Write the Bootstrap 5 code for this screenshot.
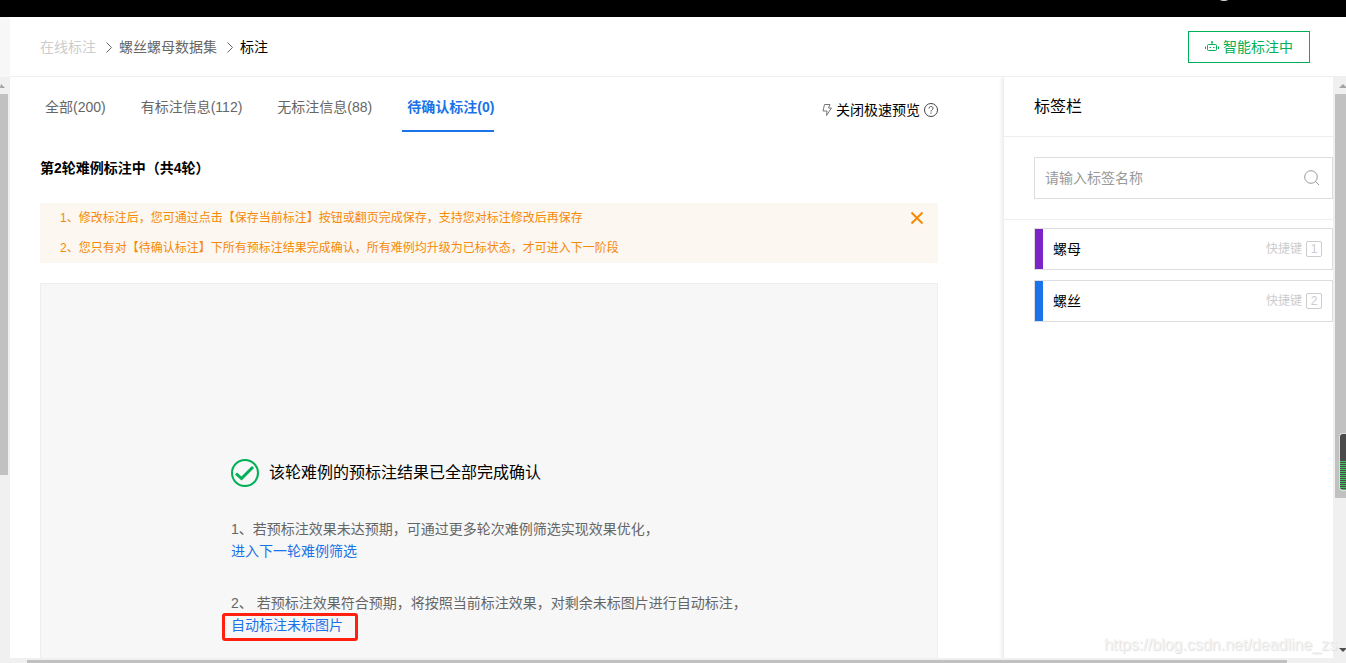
<!DOCTYPE html>
<html lang="zh-CN">
<head>
<meta charset="utf-8">
<meta name="viewport" content="width=device-width, initial-scale=1">
<title>标注</title>
<link href="https://cdn.jsdelivr.net/npm/bootstrap@5.3.0/dist/css/bootstrap.min.css" rel="stylesheet">
<style>
body { font: 14px/22px "Liberation Sans", "Noto Sans CJK SC", sans-serif; color: #000; background: #fff; }
a { color: #1a73e8; text-decoration: none; }
svg { display: block; flex: none; }
.top-strip { height: 17px; background: #000; overflow: hidden; }
.top-dot { right: 116px; top: -6px; width: 12px; height: 7px; border-radius: 50%; background: #ddd; }
.gutter { width: 10px; background: #f7f7f7; }
.page-head { height: 60px; }
.head-main { border-bottom: 1px solid #eee; padding: 0 36px 0 30px; }
.crumbs .breadcrumb-item + .breadcrumb-item { padding-left: 9px; }
.crumbs .breadcrumb-item + .breadcrumb-item::before { content: none; }
.crumbs svg { margin-right: 5px; }
.c-mute { color: #ccc; }
.c-gray { color: #666; }
.btn-smart { --bs-btn-color: #00b057; --bs-btn-border-color: #00b057; --bs-btn-hover-bg: #eefaf3; --bs-btn-hover-color: #00b057; --bs-btn-hover-border-color: #00b057; border-radius: 0; height: 32px; padding: 0 16px; font-size: 14px; line-height: 22px; }
.vbar { background: #f0f0f0; }
.vbar-left { width: 10px; padding-right: 2px; }
.vbar-right { width: 13px; padding-left: 2px; }
.vbar .arrow-box { height: 17px; flex: none; }
.thumb { background: #c1c1c1; }
.thumb-left { height: 381px; height: 65.6%; flex: none; }
.thumb-right { height: 69.5%; flex: none; }
.arrow { width: 0; height: 0; margin-top: 1px; border: 4px solid transparent; border-top: 0; border-bottom-color: #a3a3a3; }
.vbar-left .arrow { border-left-width: 1px; }
.arrow.down { border-top: 4px solid #505050; border-bottom: 0; }
.hbar { height: 5px; background: #f0f0f0; padding: 2px 59px 0 27px; }
.main-pane { padding: 0 65px 0 30px; min-width: 0; }
.tabs { gap: 30px; }
.tabs .nav-link { color: #666; padding: 19px 0 12px 5px; border-bottom: 2px solid transparent; }
.tabs .nav-link.active { color: #1a73e8; font-weight: 700; border-color: #1a73e8; }
.quick { padding: 22px 0 0; line-height: 22px; }
.round-title { font-size: 14px; line-height: 22px; font-weight: 700; margin: 25px 0 24px; }
.notice { background: #fcf7f1; color: #f58a07; font-size: 12px; line-height: 30px; padding: 0 14px 0 20px; margin-bottom: 20px; }
.canvas-area { background: #f7f7f7; border: 1px solid #eee; border-bottom: 0; padding: 175px 0 0 190px; overflow: hidden; }
.done-title { font-size: 16px; line-height: 28px; font-weight: 400; margin-bottom: 31px; }
.option-two { margin-top: 30px; }
.hl { left: -9px; top: -1px; width: 136px; height: 28px; border: 3px solid #ff2010; border-radius: 3px; pointer-events: none; }
.side { width: 330px; border-left: 1px solid #eee; box-shadow: -2px 0 3px #f0f0f0; }
.side-title { font-size: 16px; line-height: 59px; font-weight: 400; padding-left: 30px; border-bottom: 1px solid #eee; }
.search-wrap { padding: 20px 0 20px 30px; border-bottom: 1px solid #eee; }
.boxed { height: 42px; border: 1px solid #ddd; }
.boxed input { padding: 0 10px; font-size: 14px; line-height: 22px; }
.boxed input::placeholder { color: #999; }
.labels { padding: 8px 0 0 30px; gap: 10px; }
.swatch { width: 8px; }
.label-name { padding-left: 10px; }
.c-1 { background: #7b25c8; }
.c-2 { background: #1a73e8; }
.hotkey { font-size: 12px; color: #ccc; margin-right: 10px; }
.keycap { width: 16px; height: 16px; border: 1px solid #ccc; border-radius: 2px; line-height: 14px; text-align: center; }
.meter { right: 0; top: 433px; width: 7px; height: 58px; border: 1px solid #ddd; border-right: 0; border-radius: 4px 0 0 4px; background: linear-gradient(#4a4a4a 26px, transparent 26px), repeating-linear-gradient(#4a4a4a 0 1px, #47c265 1px 2px); }
.watermark { right: 9px; bottom: 7px; font-size: 16px; color: #f4f4f4; text-shadow: 1px 1px 1px #ddd; pointer-events: none; }
</style>
</head>
<body class="vh-100 d-flex flex-column overflow-hidden position-relative">
<div class="top-strip position-relative"><span class="top-dot position-absolute"></span></div>
<header class="page-head d-flex">
  <div class="gutter"></div>
  <div class="head-main flex-grow-1 d-flex justify-content-between align-items-center">
    <nav aria-label="breadcrumb">
      <ol class="breadcrumb crumbs mb-0">
        <li class="breadcrumb-item"><a href="#" class="c-mute">在线标注</a></li>
        <li class="breadcrumb-item d-flex align-items-center"><svg width="9" height="12" viewBox="0 0 9 12" fill="none" stroke="#666"><path d="M1.5 1.500 6.500 6.500 1.500 11.500"/></svg><a href="#" class="c-gray">螺丝螺母数据集</a></li>
        <li class="breadcrumb-item active text-black d-flex align-items-center"><svg width="9" height="12" viewBox="0 0 9 12" fill="none" stroke="#666"><path d="M1.500 1.500 6.500 6.500 1.500 11.500"/></svg>标注</li>
      </ol>
    </nav>
    <button type="button" class="btn btn-smart d-flex align-items-center gap-1"><svg width="14" height="12" viewBox="0 0 14 12" fill="none" stroke="#00b057"><rect x="2.500" y="3.500" width="9" height="6" rx="1"/><path d="M7 1v2.500M.5 5.500v2.500M13.500 5.500v2.500M4.500 6.500h1.500M8 6.500h1.500"/><circle cx="7" cy="1" r=".6"/></svg>智能标注中</button>
  </div>
</header>
<div class="flex-grow-1 d-flex overflow-hidden">
  <div class="vbar vbar-left d-flex flex-column">
    <div class="arrow-box d-flex align-items-center"><span class="arrow"></span></div>
    <div class="thumb thumb-left"></div>
  </div>
  <main class="main-pane flex-grow-1 d-flex flex-column">
    <div class="d-flex justify-content-between align-items-start">
      <ul class="nav tabs">
        <li class="nav-item"><a class="nav-link" href="#">全部(200)</a></li>
        <li class="nav-item"><a class="nav-link" href="#">有标注信息(112)</a></li>
        <li class="nav-item"><a class="nav-link" href="#">无标注信息(88)</a></li>
        <li class="nav-item"><a class="nav-link active" href="#">待确认标注(0)</a></li>
      </ul>
      <button type="button" class="quick border-0 bg-transparent text-black d-flex align-items-center gap-1"><svg width="10" height="14" viewBox="0 0 10 14" fill="none" stroke="#777"><path d="M2.500 1.500h5.500L6.500 5h3L4.500 12.500 5 8H1z"/></svg>关闭极速预览<svg width="14" height="14" viewBox="0 0 14 14" fill="none" stroke="#444"><circle cx="7" cy="7" r="6.500"/><path d="M5 5.500C5 2.800 9 2.800 9 5.300 9 6.700 7 6.800 7 8.500M7 9.500v1.200"/></svg></button>
    </div>
    <h1 class="round-title">第2轮难例标注中（共4轮）</h1>
    <div class="notice d-flex justify-content-between align-items-start">
      <div><div>1、修改标注后，您可通过点击【保存当前标注】按钮或翻页完成保存，支持您对标注修改后再保存</div><div>2、您只有对【待确认标注】下所有预标注结果完成确认，所有难例均升级为已标状态，才可进入下一阶段</div></div>
      <button type="button" class="border-0 bg-transparent p-0 mt-2" aria-label="关闭"><svg width="14" height="14" viewBox="0 0 14 14" stroke="#f58a07" stroke-width="2"><path d="M1.500 1.500 12.500 12.500M12.500 1.500 1.500 12.500"/></svg></button>
    </div>
    <section class="canvas-area flex-grow-1">
      <h2 class="done-title d-flex align-items-center"><svg class="me-2" width="30" height="28" viewBox="0 0 30 28" fill="none" stroke="#00b057"><circle cx="14" cy="14" r="13" stroke-width="2"/><path d="M5 14.500 10.500 19.500 22 8" stroke-width="3"/></svg>该轮难例的预标注结果已全部完成确认</h2>
      <div class="c-gray">1、若预标注效果未达预期，可通过更多轮次难例筛选实现效果优化，</div>
      <a href="#">进入下一轮难例筛选</a>
      <div class="c-gray option-two">2、 若预标注效果符合预期，将按照当前标注效果，对剩余未标图片进行自动标注，</div>
      <div class="position-relative"><a href="#">自动标注未标图片</a><span class="hl position-absolute"></span></div>
    </section>
  </main>
  <aside class="side flex-shrink-0">
    <h2 class="side-title mb-0">标签栏</h2>
    <div class="search-wrap">
      <div class="boxed d-flex align-items-center">
        <input type="text" class="flex-grow-1 border-0 bg-transparent" placeholder="请输入标签名称" aria-label="标签名称">
        <svg class="me-2" width="20" height="16" viewBox="0 0 20 16" fill="none" stroke="#999"><circle cx="7" cy="7" r="6.300"/><path d="m11.500 11.500 3.500 3.500"/></svg>
      </div>
    </div>
    <div class="labels d-flex flex-column">
      <div class="boxed d-flex align-items-center"><span class="swatch c-1 h-100"></span><span class="flex-grow-1 label-name">螺母</span><span class="hotkey d-flex align-items-center gap-1">快捷键<span class="keycap">1</span></span></div>
      <div class="boxed d-flex align-items-center"><span class="swatch c-2 h-100"></span><span class="flex-grow-1 label-name">螺丝</span><span class="hotkey d-flex align-items-center gap-1">快捷键<span class="keycap">2</span></span></div>
    </div>
  </aside>
  <div class="vbar vbar-right d-flex flex-column">
    <div class="arrow-box d-flex align-items-center ps-1"><span class="arrow"></span></div>
    <div class="thumb thumb-right"></div>
    <div class="arrow-box d-flex align-items-center ps-1 mt-auto"><span class="arrow down"></span></div>
  </div>
</div>
<div class="hbar"><div class="thumb h-100"></div></div>
<div class="meter position-absolute"></div>
<div class="watermark position-absolute">https://blog.csdn.net/deadline_zs</div>
<script src="https://cdn.jsdelivr.net/npm/bootstrap@5.3.0/dist/js/bootstrap.bundle.min.js"></script>
</body>
</html>
